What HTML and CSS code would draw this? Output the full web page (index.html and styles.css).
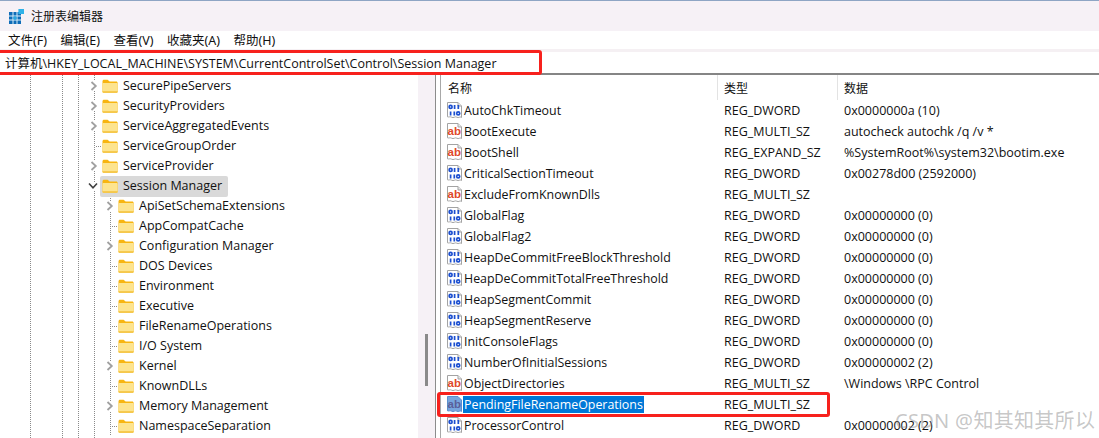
FILE: index.html
```html
<!DOCTYPE html>
<html lang="zh-CN">
<head>
<meta charset="utf-8">
<title>注册表编辑器</title>
<link rel="stylesheet" href="styles.css">
</head>
<body>
<svg class="defs" width="0" height="0" aria-hidden="true">
  <symbol id="folder" viewBox="0 0 16 14">
    <path d="M0.5 2.2C0.5 1.3 1.1 .7 2 .7H5.6L7.6 2.6H14.2C15.1 2.6 15.6 3.2 15.6 4V12.4C15.6 13.2 15.1 13.7 14.2 13.7H1.9C1.1 13.7 .5 13.2 .5 12.4Z" fill="#f7b511"/>
    <path d="M.5 5C.5 4.3 1 3.9 1.7 3.9H14.4C15.1 3.9 15.6 4.3 15.6 5V12.4C15.6 13.2 15.1 13.7 14.2 13.7H1.9C1.1 13.7 .5 13.2 .5 12.4Z" fill="#fde48f"/>
    <path d="M.5 12.2V12.4C.5 13.2 1.1 13.7 1.9 13.7H14.2C15.1 13.7 15.6 13.2 15.6 12.4V12.2Z" fill="#f3c13d"/>
  </symbol>
  <symbol id="sheet" viewBox="0 0 17 17">
    <path d="M1.5 .5H12L15.5 4V15.5C13.8 14 12.8 16.5 10.8 15.2 9 14 7.6 16.5 5.6 15.2 4 14.2 3 15.4 1.5 14.8Z" fill="#fff" stroke="#a3a3a3"/>
    <path d="M12 .5V4H15.5" fill="#e8e8e8" stroke="#a3a3a3"/>
  </symbol>
  <symbol id="dword" viewBox="0 0 17 17">
    <use href="#sheet"/>
    <g fill="none" stroke="#1c4fd0" stroke-width="1.7">
      <circle cx="4.6" cy="4.9" r="1.5"/>
      <path d="M8.6 3V7M12.3 3V7M4.6 9.4V13.4M8.3 9.4V13.4"/>
      <circle cx="12.2" cy="11.4" r="1.5"/>
    </g>
  </symbol>
  <symbol id="ab" viewBox="0 0 17 17">
    <use href="#sheet"/>
    <text x="1.6" y="11.8" class="ab-text">ab</text>
  </symbol>
  <symbol id="ab-sel" viewBox="0 0 17 17">
    <path d="M1.5 .5H12L15.5 4V15.5C13.8 14 12.8 16.5 10.8 15.2 9 14 7.6 16.5 5.6 15.2 4 14.2 3 15.4 1.5 14.8Z" fill="#77a6de" stroke="#5b8fcf"/>
    <text x="1.6" y="11.8" class="ab-text ab-text-sel">ab</text>
  </symbol>
  <symbol id="chev-r" viewBox="0 0 8 10"><path d="M1.5 1L5.8 5 1.5 9" fill="none" stroke="#a0a0a0" stroke-width="1.8"/></symbol>
  <symbol id="chev-d" viewBox="0 0 10 8"><path d="M1 1.5L5 5.8 9 1.5" fill="none" stroke="#404040" stroke-width="1.6"/></symbol>
</svg>

<header class="titlebar">
  <svg class="appicon" width="15" height="15" viewBox="0 0 15 15" aria-hidden="true">
    <path d="M0 3H12V15H0Z" fill="#0f6cb8"/>
    <path d="M4 3V15M8 3V15M0 7H12M0 11H12" stroke="#d9eef9"/>
    <path d="M4.5 7.5H7.5V10.5H4.5Z" fill="#27a7e0"/>
    <path d="M9.4 0H15V5H9.4Z" fill="#2fb2e8"/>
  </svg>
  <span class="title">注册表编辑器</span>
</header>

<nav class="menubar">
  <span>文件(F)</span><span>编辑(E)</span><span>查看(V)</span><span>收藏夹(A)</span><span>帮助(H)</span>
</nav>

<div class="address">计算机\HKEY_LOCAL_MACHINE\SYSTEM\CurrentControlSet\Control\Session Manager</div>

<main class="panes">
  <section class="tree">
    <div class="node l1"><svg class="tw-r"><use href="#chev-r"/></svg><svg class="fld"><use href="#folder"/></svg><span>SecurePipeServers</span></div>
    <div class="node l1"><svg class="tw-r"><use href="#chev-r"/></svg><svg class="fld"><use href="#folder"/></svg><span>SecurityProviders</span></div>
    <div class="node l1"><svg class="tw-r"><use href="#chev-r"/></svg><svg class="fld"><use href="#folder"/></svg><span>ServiceAggregatedEvents</span></div>
    <div class="node l1"><i class="tick"></i><svg class="fld"><use href="#folder"/></svg><span>ServiceGroupOrder</span></div>
    <div class="node l1"><svg class="tw-r"><use href="#chev-r"/></svg><svg class="fld"><use href="#folder"/></svg><span>ServiceProvider</span></div>
    <div class="node l1 current"><svg class="tw-d"><use href="#chev-d"/></svg><div class="current-label"><svg class="fld"><use href="#folder"/></svg><span>Session Manager</span></div></div>
    <div class="children">
      <div class="node l2"><svg class="tw-r"><use href="#chev-r"/></svg><svg class="fld"><use href="#folder"/></svg><span>ApiSetSchemaExtensions</span></div>
      <div class="node l2"><i class="tick"></i><svg class="fld"><use href="#folder"/></svg><span>AppCompatCache</span></div>
      <div class="node l2"><svg class="tw-r"><use href="#chev-r"/></svg><svg class="fld"><use href="#folder"/></svg><span>Configuration Manager</span></div>
      <div class="node l2"><i class="tick"></i><svg class="fld"><use href="#folder"/></svg><span>DOS Devices</span></div>
      <div class="node l2"><i class="tick"></i><svg class="fld"><use href="#folder"/></svg><span>Environment</span></div>
      <div class="node l2"><i class="tick"></i><svg class="fld"><use href="#folder"/></svg><span>Executive</span></div>
      <div class="node l2"><i class="tick"></i><svg class="fld"><use href="#folder"/></svg><span>FileRenameOperations</span></div>
      <div class="node l2"><i class="tick"></i><svg class="fld"><use href="#folder"/></svg><span>I/O System</span></div>
      <div class="node l2"><svg class="tw-r"><use href="#chev-r"/></svg><svg class="fld"><use href="#folder"/></svg><span>Kernel</span></div>
      <div class="node l2"><i class="tick"></i><svg class="fld"><use href="#folder"/></svg><span>KnownDLLs</span></div>
      <div class="node l2"><svg class="tw-r"><use href="#chev-r"/></svg><svg class="fld"><use href="#folder"/></svg><span>Memory Management</span></div>
      <div class="node l2"><i class="tick"></i><svg class="fld"><use href="#folder"/></svg><span>NamespaceSeparation</span></div>
    </div>
  </section>

  <div class="track"><div class="thumb"></div></div>
  <div class="splitter"></div>

  <section class="list">
    <div class="head"><span class="h-name">名称</span><span class="h-type">类型</span><span class="h-data">数据</span></div>
    <div class="row"><span class="name"><svg class="ico"><use href="#dword"/></svg><b>AutoChkTimeout</b></span><span>REG_DWORD</span><span>0x0000000a (10)</span></div>
    <div class="row"><span class="name"><svg class="ico"><use href="#ab"/></svg><b>BootExecute</b></span><span>REG_MULTI_SZ</span><span>autocheck autochk /q /v *</span></div>
    <div class="row"><span class="name"><svg class="ico"><use href="#ab"/></svg><b>BootShell</b></span><span>REG_EXPAND_SZ</span><span>%SystemRoot%\system32\bootim.exe</span></div>
    <div class="row"><span class="name"><svg class="ico"><use href="#dword"/></svg><b>CriticalSectionTimeout</b></span><span>REG_DWORD</span><span>0x00278d00 (2592000)</span></div>
    <div class="row"><span class="name"><svg class="ico"><use href="#ab"/></svg><b>ExcludeFromKnownDlls</b></span><span>REG_MULTI_SZ</span><span></span></div>
    <div class="row"><span class="name"><svg class="ico"><use href="#dword"/></svg><b>GlobalFlag</b></span><span>REG_DWORD</span><span>0x00000000 (0)</span></div>
    <div class="row"><span class="name"><svg class="ico"><use href="#dword"/></svg><b>GlobalFlag2</b></span><span>REG_DWORD</span><span>0x00000000 (0)</span></div>
    <div class="row"><span class="name"><svg class="ico"><use href="#dword"/></svg><b>HeapDeCommitFreeBlockThreshold</b></span><span>REG_DWORD</span><span>0x00000000 (0)</span></div>
    <div class="row"><span class="name"><svg class="ico"><use href="#dword"/></svg><b>HeapDeCommitTotalFreeThreshold</b></span><span>REG_DWORD</span><span>0x00000000 (0)</span></div>
    <div class="row"><span class="name"><svg class="ico"><use href="#dword"/></svg><b>HeapSegmentCommit</b></span><span>REG_DWORD</span><span>0x00000000 (0)</span></div>
    <div class="row"><span class="name"><svg class="ico"><use href="#dword"/></svg><b>HeapSegmentReserve</b></span><span>REG_DWORD</span><span>0x00000000 (0)</span></div>
    <div class="row"><span class="name"><svg class="ico"><use href="#dword"/></svg><b>InitConsoleFlags</b></span><span>REG_DWORD</span><span>0x00000000 (0)</span></div>
    <div class="row"><span class="name"><svg class="ico"><use href="#dword"/></svg><b>NumberOfInitialSessions</b></span><span>REG_DWORD</span><span>0x00000002 (2)</span></div>
    <div class="row"><span class="name"><svg class="ico"><use href="#ab"/></svg><b>ObjectDirectories</b></span><span>REG_MULTI_SZ</span><span>\Windows \RPC Control</span></div>
    <div class="row"><span class="name"><svg class="ico"><use href="#ab-sel"/></svg><b class="sel">PendingFileRenameOperations</b></span><span>REG_MULTI_SZ</span><span></span></div>
    <div class="row"><span class="name"><svg class="ico"><use href="#dword"/></svg><b>ProcessorControl</b></span><span>REG_DWORD</span><span>0x00000002 (2)</span></div>
  </section>
</main>

<div class="mark mark-address"></div>
<div class="mark mark-row"></div>
<div class="watermark">CSDN @知其知其所以</div>
</body>
</html>
```
FILE: styles.css
```css
* { box-sizing: border-box; }
html, body { margin: 0; padding: 0; }
body {
  position: relative;
  width: 1099px;
  height: 438px;
  overflow: hidden;
  background: #fff;
  color: #111;
  font: 12.5px/16px "Open Sans", "Noto Sans CJK SC", sans-serif;
}
.defs { display: none; }
.ab-text { font: 700 11.5px "Liberation Sans", sans-serif; fill: #e0492a; }
.ab-text-sel { fill: #5a5f9a; }

.titlebar {
  display: flex;
  align-items: center;
  height: 31px;
  padding: 0 0 0 9px;
  background: #f6f1f6;
  border-top: 1px solid #8ea5c4;
}
.appicon { margin-right: 7px; }
.title { font-family: "Noto Sans CJK SC", sans-serif; font-size: 12px; }

.menubar {
  display: flex;
  gap: 13.5px;
  align-items: center;
  height: 18px;
  padding: 2px 0 0 8px;
  background: #fff;
}
.menubar span { font-family: "Noto Sans", "Noto Sans CJK SC", sans-serif; }

.address {
  height: 26px;
  padding: 3px 0 0 5px;
  background: #fff;
  border-top: 3px solid #f5f0f3;
  border-bottom: 2px solid #858585;
  line-height: 18px;
  white-space: nowrap;
}

.panes {
  display: flex;
  height: 363px;
  overflow: hidden;
}

.tree {
  width: 418px;
  flex: none;
  padding-top: 1px;
  background-image:
    linear-gradient(#8a8a8a 50%, transparent 50%),
    linear-gradient(#8a8a8a 50%, transparent 50%),
    linear-gradient(#8a8a8a 50%, transparent 50%),
    linear-gradient(#8a8a8a 50%, transparent 50%);
  background-size: 1px 2px;
  background-repeat: repeat-y;
  background-position: 30px 0, 62px 0, 78px 0, 94px 0;
}
.node {
  position: relative;
  display: flex;
  align-items: center;
  height: 20px;
  white-space: nowrap;
}
.l1 { padding-left: 102px; }
.l2 { padding-left: 118px; }
.fld { width: 16px; height: 14px; margin-right: 5px; flex: none; }
.tw-r, .tw-d, .tick { position: absolute; display: block; }
.tw-r { width: 8px; height: 10px; top: 5px; background: #fff; }
.l1 .tw-r { left: 90px; }
.l2 .tw-r { left: 106px; }
.tw-d { width: 10px; height: 8px; top: 6px; left: 88px; background: #fff; }
.tick {
  top: 10px;
  height: 1px;
  width: 6px;
  background: linear-gradient(90deg, #8a8a8a 50%, transparent 50%) 0 0 / 2px 1px repeat-x;
}
.l1 .tick { left: 96px; }
.l2 .tick { left: 112px; }
.current-label {
  display: flex;
  align-items: center;
  width: 128px;
  height: 21px;
  margin-left: -2px;
  padding-left: 2px;
  border-radius: 2px;
  background: #d9d9d9;
}
.children {
  background: linear-gradient(#8a8a8a 50%, transparent 50%) 110px 0 / 1px 2px repeat-y;
}

.track {
  position: relative;
  width: 17px;
  flex: none;
  background: #f6f1f6;
}
.thumb {
  position: absolute;
  top: 259px;
  left: 7px;
  width: 3px;
  height: 52px;
  background: #8a8a8a;
}
.splitter {
  width: 5px;
  flex: none;
  border-left: 1px solid #8c8c8c;
}

.list {
  flex: 1;
  min-width: 0;
  border-left: 1px solid #a8a8a8;
}
.head {
  display: grid;
  grid-template-columns: 277px 120px 1fr;
  height: 25px;
  align-items: center;
}
.head span {
  height: 25px;
  line-height: 25px;
  font-size: 12px;
  font-family: "Noto Sans CJK SC", sans-serif;
  border-right: 1px solid #e3e3e3;
}
.h-name { padding-left: 7px; }
.h-type { padding-left: 6px; }
.h-data { padding-left: 6px; border-right: 0 !important; }
.row {
  display: grid;
  grid-template-columns: 283px 120px 1fr;
  height: 21px;
  align-items: center;
  white-space: nowrap;
}
.name { display: flex; align-items: center; padding-left: 5px; }
.name b { font-weight: 400; font-size: 12.4px; padding: 0 1px; line-height: 17px; }
.ico { width: 17px; height: 17px; flex: none; }
.sel { background: #0078d7; color: #fff; }

.mark {
  position: absolute;
  border: 3px solid #f7211d;
  border-radius: 3px;
}
.mark-address { left: -4px; top: 50px; width: 546px; height: 25px; }
.mark-row { left: 437px; top: 392px; width: 393px; height: 25px; }

.watermark {
  position: absolute;
  left: 895px;
  top: 407px;
  font: 20px/28px "Noto Sans", "Noto Sans CJK SC", sans-serif;
  letter-spacing: .3px;
  color: rgba(130, 130, 130, .45);
  white-space: nowrap;
}
```
